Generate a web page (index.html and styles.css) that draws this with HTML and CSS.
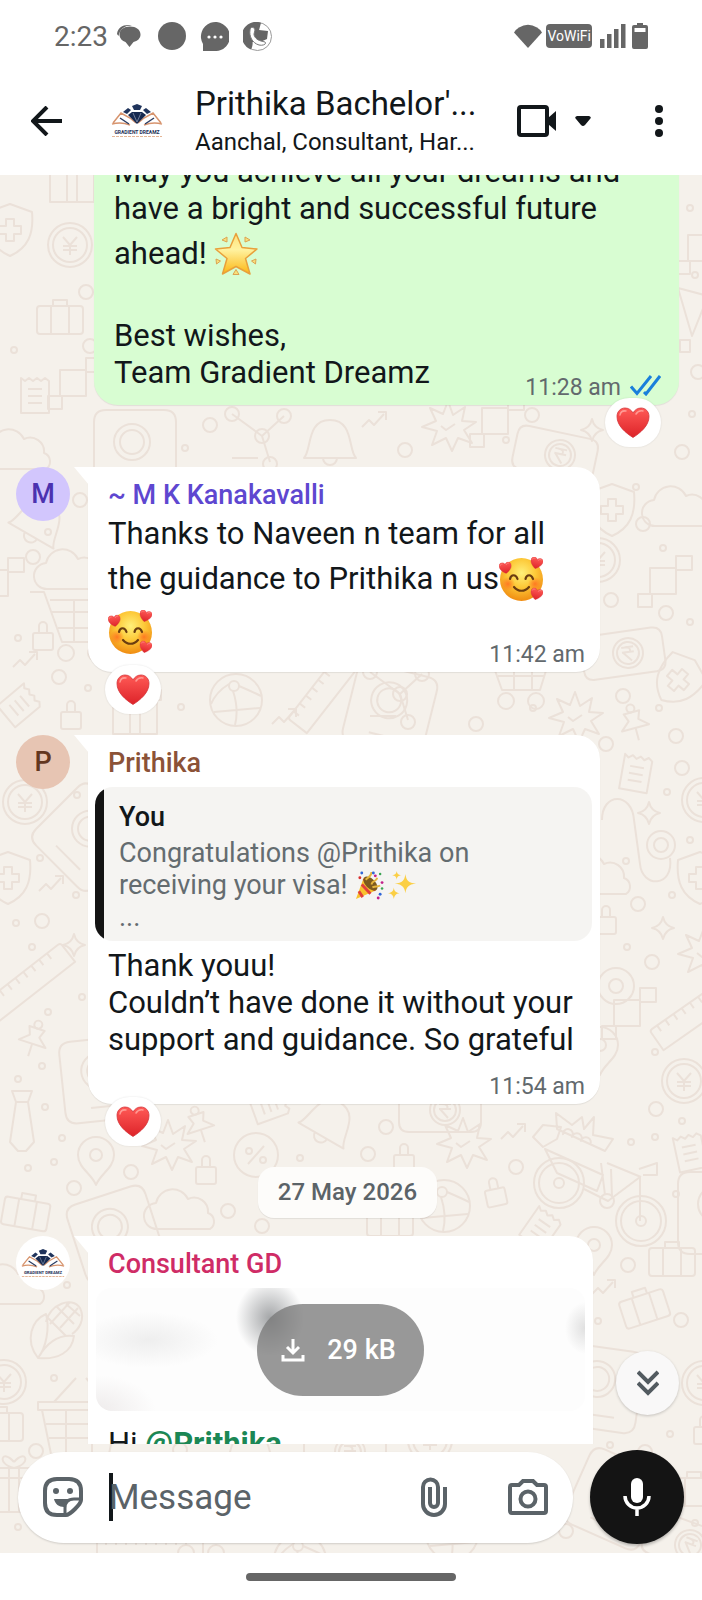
FILE: index.html
```
<!DOCTYPE html>
<html lang="en">
<head>
<meta charset="UTF-8" />
<meta name="viewport" content="width=device-width, initial-scale=1.0"/>
<title>Prithika Bachelor's - Chat</title>
<link rel="stylesheet" href="styles.css">
</head>
<body>

<!-- Shared drawings -->
<svg class="defs" aria-hidden="true">
    <defs>
        <linearGradient id="heartFill" x1="0" y1="0" x2="0" y2="1">
            <stop offset="0" stop-color="#ff5a56"/>
            <stop offset="1" stop-color="#dd2329"/>
        </linearGradient>
        <radialGradient id="faceFill" cx=".5" cy=".35" r=".65">
            <stop offset="0" stop-color="#fff07a"/>
            <stop offset=".5" stop-color="#fdc938"/>
            <stop offset="1" stop-color="#f08c12"/>
        </radialGradient>
        <radialGradient id="cheekFill">
            <stop offset="0" stop-color="#ff7a22"/>
            <stop offset="1" stop-color="#ff7a22" stop-opacity="0"/>
        </radialGradient>
        <linearGradient id="starFill" x1="0" y1="0" x2="0" y2="1">
            <stop offset="0" stop-color="#ffe27a"/>
            <stop offset=".4" stop-color="#fff2a0"/>
            <stop offset="1" stop-color="#fcb712"/>
        </linearGradient>
        <symbol id="heart" viewBox="0 0 34 31">
            <path d="M17 30.500C10 26 1 19 1 9.500C1 4.500 4.500 1 9 1c3.500 0 6.500 2 8 5c1.500-3 4.500-5 8-5c4.500 0 8 3.500 8 8.500C33 19 24 26 17 30.500z" fill="url(#heartFill)" stroke="#d3353a" stroke-width=".8"/>
            <path d="M4 8c.5-3 3-4.500 6-4M20 7c1.500-2.500 4-3.500 7-3" stroke="#ff9a94" stroke-width="1.500" fill="none" stroke-linecap="round"/>
        </symbol>
        <symbol id="loveFace" viewBox="0 0 44 44">
            <circle cx="22.500" cy="22.500" r="21.500" fill="url(#faceFill)"/>
            <circle cx="9" cy="27" r="7" fill="url(#cheekFill)"/>
            <circle cx="36" cy="27" r="7" fill="url(#cheekFill)"/>
            <path d="M11 22c1-5 6-5 7.500 0M26.500 22c1-5 6-5 7.500 0" stroke="#6b3d10" stroke-width="2.200" fill="none" stroke-linecap="round"/>
            <path d="M15 30c4 5 11 5 15 0" stroke="#6b3d10" stroke-width="2.200" fill="none" stroke-linecap="round"/>
            <use href="#heart" x="0" y="5" width="13" height="12" transform="rotate(-8 6 11)"/>
            <use href="#heart" x="31" y="0" width="13" height="12" transform="rotate(14 37 6)"/>
            <use href="#heart" x="31" y="31" width="13" height="12" transform="rotate(14 37 37)"/>
        </symbol>
        <symbol id="glowStar" viewBox="0 0 44 44">
            <path d="M22 1.500l6 14 15 1.500-11.500 9.500 4.500 15.500L22 34.500 8.500 42 13 26.500 1.500 17l14.500-1.500z" fill="url(#starFill)" stroke="#e8a03c" stroke-width="1.500" stroke-linejoin="round"/>
            <path d="M8 8l5-3v5zM31 5l5 3-5 2zM2 27l4.500 2L2.500 32zM42 27l-4.500 2 4 3zM19 42.500l3-5 3 5z" fill="#f8e27a" stroke="#dca353"/>
        </symbol>
        <symbol id="popper" viewBox="0 0 30 30">
            <path d="M1 29L9 7c5 1 11 7 13 13z" fill="#f9c22e"/>
            <path d="M4 21l4 6M7 14l9 9.500M9 8l12 12" stroke="#e2403b" stroke-width="3"/>
            <ellipse cx="16" cy="13" rx="5" ry="9" transform="rotate(-45 16 13)" fill="#7d5a1c"/>
            <path d="M11 9c4-4 6-3 6-8M17 14c1-5 5-2 6-7M18 17c4-2 5 0 8-2" fill="none" stroke="#e6b63c" stroke-width="2"/>
            <g fill="#c3218a"><circle cx="21" cy="5" r="1.500"/><circle cx="28" cy="12" r="1.500"/><circle cx="24" cy="28" r="1.500"/></g>
            <g fill="#3167d8"><circle cx="7" cy="2" r="1.500"/><circle cx="19" cy="2" r="1.500"/><circle cx="26" cy="24" r="1.500"/></g>
            <g fill="#3ba553"><circle cx="26" cy="3" r="1.300"/><circle cx="28" cy="18" r="1.300"/></g>
            <circle cx="5" cy="7" r="1.500" fill="#d93030"/>
        </symbol>
        <symbol id="sparkles" viewBox="0 0 30 30">
            <path d="M18 3c1 7 3 9 11 10-8 1-10 4-11 10-1-6-3-9-11-10 8-1 10-3 11-10zM6 17c.5 4 2 5 6 6-4 .5-5 2-6 6-.5-4-2-5.500-6-6 4-1 5.500-2 6-6zM9 0c.5 3 1.500 4 5 4.500-3.500.5-4.500 1.500-5 4.500-.5-3-1.500-4-5-4.500 3.500-.5 4.500-1.500 5-4.500z" fill="#fbcf45"/>
        </symbol>
        <symbol id="logo" viewBox="0 0 52 34">
            <g fill="none" stroke="#d7946e" stroke-width="1.500">
                <path d="M2 19l8-10 9 5 6 5M1 20c7-2 13-1 18 1M50 19l-8-10-9 5-6 5M51 20c-7-2-13-1-18 1"/>
                <path d="M9 14l9 6M43 14l-9 6" stroke="#2c3e63"/>
            </g>
            <path d="M17 11l4-3h10l4 3-9 9z" fill="#16294f"/>
            <path d="M21 2l5-2 5 2-2 4h-6zM12 8l5-4 3 2-4 4zM40 8l-5-4-3 2 4 4z" fill="#20345c"/>
            <path d="M22 9l4 9 4-9" stroke="#8693ad" stroke-width=".8" fill="none"/>
            <text x="26" y="29.500" text-anchor="middle" class="logo-name">GRADIENT DREAMZ</text>
            <path d="M1 32.500h50" stroke="#e5b595" stroke-width="1.200" stroke-dasharray="3 1"/>
        </symbol>

        <!-- Wallpaper doodles -->
        <g id="lock"><path d="M-8-3H8q2 0 2 2v13q0 2-2 2H-8q-2 0-2-2V-1q0-2 2-2zM-4-3v-7a4 4 0 018 0v7"/></g>
        <g id="dot"><circle r="3"/></g>
        <g id="ring"><circle r="7"/></g>
        <g id="coin"><circle r="22"/><circle r="17"/><path d="M-7-8L0 0l7-8M0 0v10M-7 1H7M-7 5H7"/></g>
        <g id="burst"><path d="M0-24l5 14 12-8-3 14 14 1-12 8 8 13-14-5-6 13-6-13-14 7 5-14-15-4 14-6-6-13 13 6z"/><path d="M-7 1l5 4 9-6"/></g>
        <g id="spark"><path d="M0-11q2 9 11 11-9 2-11 11-2-9-11-11 9-2 11-11z"/></g>
        <g id="receipt"><path d="M-14-17l4 3 4-3 4 3 4-3 4 3 4-3 4 3v32h-28zM-7-6H7M-7 1H7M-7 8H7"/></g>
        <g id="pin"><path d="M0 25c-4-11-18-17-18-30a18 18 0 0136 0C18 8 4 14 0 25z"/><circle cy="-5" r="6"/></g>
        <g id="boxes"><path d="M-18-10H8v26h-26zM8-22h16v14H8zM-30 16h14v13h-14z"/></g>
        <g id="ruler"><path d="M-50-12H50q3 0 3 3V12H-53V-9q0-3 3-3zM-44-12v7M-34-12v7M-24-12v7M-14-12v7M-4-12v7M6-12v7M16-12v7M26-12v7M36-12v7"/></g>
        <g id="trend"><path d="M-13 7l7-7 5 5L9-6M3-8h8v8"/></g>
        <g id="tie"><path d="M-10-30H10L6-19H-6zM-6-19l-6 40 8 9h8l8-9-6-40"/></g>
        <g id="pushpin"><path d="M-8-10H8l-3 8 9 8H-14l9-8zM0 6v13"/><circle cy="-14" r="4"/></g>
        <g id="case"><path d="M-20-12h40q3 0 3 3v22q0 3-3 3h-40q-3 0-3-3V-9q0-3 3-3zM-7-12v-6H7v6M-9-12v28M9-12v28"/></g>
        <g id="bell"><path d="M-26 18c8-8 2-38 26-38s18 30 26 38zM-7 18a7 7 0 0014 0"/></g>
        <g id="cart"><path d="M-40-28h14l18 50h38l13-42h-63M-18-8h57M-12 8h46M4-20v42M22-20v42"/><circle cx="-4" cy="33" r="8"/><circle cx="26" cy="33" r="8"/></g>
        <g id="basket"><path d="M-38-10h76l-9 44h-58zM-42-18h84v8h-84zM-34 4h68M-31 18h62M-14-10v44M12-10v44M-26-18l22-24M26-18L6-42"/></g>
        <g id="card"><path d="M-36-22h62q10 0 10 10v24q0 10-10 10h-62q-10 0-10-10v-24q0-10 10-10z"/><circle r="15"/><circle r="11"/><path d="M-6-6H6M-6-1H6M-3-6q7 0 5 5H-5L3 8"/></g>
        <g id="shield"><path d="M0-26l22 8c2 22-4 36-22 44-18-8-24-22-22-44zM-4-11h8v7h7v8H4v7h-8V4h-7v-8h7z"/></g>
        <g id="cloud"><path d="M-26 14a13 13 0 01-2-26 17 17 0 0132-4 14 14 0 0120 14 9 9 0 012 16z"/></g>
        <g id="net"><path d="M-30-18L0 4l22-20M0 4l8 26M-30 26h26"/><circle cx="-30" cy="-18" r="7"/><circle cx="22" cy="-16" r="7"/><circle r="7" cy="4"/><circle cx="8" cy="32" r="7"/></g>
        <g id="phone"><path d="M-34-40h58q12 0 12 12v58q0 12-12 12h-58q-12 0-12-12v-58q0-12 12-12z"/><circle cx="-8" cy="-8" r="18"/><circle cx="-8" cy="-8" r="12"/><path d="M-20 28H14"/></g>
        <g id="gift"><path d="M-22-12h44v34h-44zM-26-22h52v10h-52zM-5-22v44M5-22v44M0-22c-18-4-12-20 0-6M0-22c18-4 12-20 0-6"/></g>
        <g id="ball"><circle r="26"/><circle cx="-2" cy="-14" r="5"/><path d="M-7-16Q-20-8-25 4M3-14q14 6 22 10M-3-9q6 18 2 34M-22 12Q0 10 24 8"/></g>
        <g id="bike"><circle r="25"/><circle r="20"/><circle r="5"/><circle cx="82" cy="38" r="25"/><circle cx="82" cy="38" r="20"/><circle cx="82" cy="38" r="5"/><circle cx="48" cy="18" r="7"/><path d="M25 6l24 12 32-24v44M42-20l4 32M48-20l34 14M52-14l1 28M-14-34l58 26-6 16-40-18zM-26-46l10-12 18 2-4 12-14 8zM-2-54l-1-16 16 12 10-8 2 12 10-12-1 18 20 4-8 12zM80-14l18-6v12H84M4-48a5 5 0 119 2 5 5 0 119 4 5 5 0 119 4"/></g>
        <g id="corn"><path d="M-20 26c-14-18-6-38 8-44 4 14 0 34-8 44zM-20 26c20 2 34-6 36-22-16-2-28 8-36 22zM-12-10c4-18 26-26 34-14 6 12-2 22-8 26M-2-26l18 18M8-28l14 12M-10-14L8 4M20-24L2-4M12-30l-20 22"/></g>
    </defs>
</svg>

<div class="phone">

    <div class="status-bar">
        <span class="clock">2:23</span>
        <svg width="24" height="24" viewBox="0 0 24 24">
            <path d="M0 10C1 3 7 0 15 1.500 9 1 3 4 1.500 12z" fill="#666"/>
            <path d="M13 2.500c6 0 10.500 3 10.500 8 0 4-3 6.500-7 7.500l-4 5-4-5C5.500 17 2.500 14.500 2.500 10.500c0-5 4.500-8 10.500-8z" fill="#666"/>
        </svg>
        <svg class="status-app" width="28" height="28" viewBox="0 0 28 28"><circle cx="14" cy="14" r="14" fill="#666"/></svg>
        <svg width="29" height="29" viewBox="0 0 29 29">
            <path d="M3 29V22A14.500 14.500 0 1114.500 29z" fill="#666"/>
            <g fill="#fff"><circle cx="9" cy="15" r="1.600"/><circle cx="15" cy="15" r="1.600"/><circle cx="21" cy="15" r="1.600"/></g>
        </svg>
        <svg width="29" height="29" viewBox="0 0 29 29">
            <circle cx="14.500" cy="14.500" r="14" fill="#fff" stroke="#999"/>
            <path d="M18 .8A14 14 0 008 27.500C9 26 10 22 9.500 20.500L15 12z" fill="#666"/>
            <path d="M11 10l5-2 9 1-1 8-9 4-4-4z" fill="#666"/>
            <path d="M7 8c0-3 4-4 5 0l-1 4c0 3 3 6 7 7l4 1c2 2-2 4-6 3C9 21 6 14 7 8z" fill="#fff" stroke="#777"/>
        </svg>
        <span class="spacer"></span>
        <svg width="28" height="24" viewBox="0 0 28 24"><path d="M14 24L0 8.500Q1 6 5 3.500 14-2 23 3.500 27 6 28 8.500z" fill="#666"/></svg>
        <span class="vowifi">VoWiFi</span>
        <svg class="signal" width="26" height="24" viewBox="0 0 26 24"><path d="M0 15h4.500v9H0zM7 10h4.500v14H7zM14 5h4.500v19H14zM21 0h4.500v24H21z" fill="#666"/></svg>
        <svg width="16" height="26" viewBox="0 0 16 26"><path d="M5 0h6v2h3q2 0 2 2v20q0 2-2 2H2q-2 0-2-2V4q0-2 2-2h3z" fill="#666"/><path d="M2.500 5h11v4h-11z" fill="#fff"/></svg>
    </div>

    <header class="header">
        <button class="icon-btn back" aria-label="Back">
            <svg width="32" height="30" viewBox="0 0 32 30"><path d="M16 1L2 15l14 14M2 15h29" fill="none" stroke="#12171a" stroke-width="4"/></svg>
        </button>
        <svg class="group-logo" width="52" height="34"><use href="#logo"/></svg>
        <div class="chat-info">
            <h1>Prithika Bachelor'...</h1>
            <p>Aanchal, Consultant, Har...</p>
        </div>
        <button class="icon-btn call" aria-label="Video call">
            <svg width="40" height="32" viewBox="0 0 40 32"><rect x="2" y="2" width="28" height="28" rx="2" fill="none" stroke="#12171a" stroke-width="4"/><path d="M31 13l8-7v20l-8-7z" fill="#12171a"/></svg>
            <svg width="16" height="10" viewBox="0 0 16 10"><path d="M2 0h12q3 1 1 3L10 9q-2 2-4 0L1 3q-2-2 1-3z" fill="#12171a"/></svg>
        </button>
        <button class="icon-btn more" aria-label="More options">
            <svg width="8" height="32" viewBox="0 0 8 32"><g fill="#12171a"><circle cx="4" cy="4" r="4"/><circle cx="4" cy="16" r="4"/><circle cx="4" cy="28" r="4"/></g></svg>
        </button>
    </header>

    <main class="chat">
        <svg class="wallpaper" viewBox="0 175 702 1378" preserveAspectRatio="xMidYMin slice" aria-hidden="true">
            <use href="#gift" x="72" y="180"/><use href="#coin" x="70" y="245"/><use href="#ring" x="86" y="292"/><use href="#shield" x="10" y="230"/>
            <use href="#case" x="60" y="318"/><use href="#ring" x="90" y="346"/><use href="#receipt" x="35" y="395"/><use href="#dot" x="14" y="350"/><use href="#boxes" x="78" y="380"/>
            <use href="#cloud" x="20" y="455"/><use href="#burst" x="448" y="425"/><use href="#boxes" x="500" y="418"/><use href="#ring" x="532" y="415"/><use href="#net" x="262" y="432"/>
            <use href="#trend" x="375" y="420"/><use href="#card" x="560" y="455" transform="rotate(12 560 455)"/><use href="#spark" x="592" y="430"/><use href="#dot" x="506" y="440"/><use href="#phone" x="140" y="450"/>
            <use href="#bell" x="330" y="440"/><use href="#ring" x="210" y="425"/><use href="#dot" x="185" y="448"/><use href="#ring" x="405" y="450"/>
            <use href="#boxes" x="706" y="245"/><use href="#dot" x="690" y="208"/><use href="#dot" x="695" y="275"/><path d="M678 288l30 8-16 40zM680 340h10v12h-10z"/><use href="#ring" x="698" y="372"/><use href="#dot" x="692" y="414"/><use href="#ring" x="682" y="452"/>
            <use href="#bell" x="40" y="520" transform="rotate(30 40 520)"/><use href="#dot" x="48" y="532"/><use href="#ring" x="80" y="500"/><use href="#ring" x="33" y="557"/><use href="#cloud" x="74" y="575"/><use href="#cart" x="70" y="620"/><use href="#lock" x="43" y="636"/><use href="#dot" x="18" y="638"/><use href="#boxes" x="0" y="580"/><use href="#trend" x="26" y="660"/><use href="#ring" x="59" y="677"/><use href="#dot" x="88" y="688"/>
            <use href="#receipt" x="20" y="705" transform="rotate(50 20 705)"/><use href="#lock" x="71" y="715"/><use href="#gift" x="135" y="712"/><use href="#dot" x="181" y="707"/><use href="#ball" x="236" y="700"/><use href="#ruler" x="330" y="684" transform="rotate(-52 330 684)"/><use href="#trend" x="285" y="717"/>
            <use href="#net" x="400" y="690"/><use href="#phone" x="395" y="710" transform="rotate(14 395 710)"/><use href="#cart" x="510" y="668"/><use href="#ring" x="476" y="724"/><use href="#burst" x="575" y="716"/><use href="#pushpin" x="634" y="722" transform="rotate(-15 634 722)"/><use href="#dot" x="533" y="708"/>
            <use href="#shield" x="612" y="510"/><use href="#cloud" x="682" y="512"/><use href="#dot" x="636" y="487"/><use href="#ring" x="643" y="524"/><use href="#dot" x="663" y="548"/><use href="#coin" x="598" y="560"/><use href="#boxes" x="668" y="578"/><use href="#ring" x="611" y="600"/><use href="#ring" x="666" y="613"/><use href="#dot" x="690" y="622"/><use href="#card" x="628" y="653" transform="rotate(-8 628 653)"/><use href="#shield" x="678" y="680" transform="rotate(40 678 680)"/><use href="#ring" x="623" y="696"/><use href="#dot" x="659" y="708"/>
            <use href="#coin" x="25" y="802"/><use href="#dot" x="77" y="795"/><use href="#phone" x="90" y="840" transform="rotate(45 90 840)"/><use href="#shield" x="8" y="878"/><use href="#dot" x="40" y="858"/><use href="#trend" x="52" y="884"/><use href="#dot" x="76" y="895"/><use href="#ring" x="42" y="921"/><use href="#dot" x="16" y="923"/><use href="#spark" x="74" y="945"/><use href="#dot" x="32" y="947"/><use href="#ruler" x="26" y="985" transform="rotate(-38 26 985)"/><use href="#dot" x="82" y="997"/>
            <use href="#receipt" x="636" y="773" transform="rotate(10 636 773)"/><use href="#ring" x="606" y="744"/><use href="#ring" x="676" y="736"/><use href="#ring" x="682" y="768"/><use href="#dot" x="667" y="792"/><use href="#spark" x="649" y="813"/><use href="#coin" x="704" y="800"/><path d="M602 820c0-28 30-28 32 0l6 44c2 24 34 24 30-6"/><use href="#ring" x="661" y="845"/><circle cx="661" cy="845" r="14"/><use href="#dot" x="690" y="840"/><use href="#shield" x="700" y="878"/><use href="#cloud" x="600" y="880"/><use href="#dot" x="626" y="861"/><use href="#ring" x="638" y="904"/><use href="#spark" x="663" y="928"/><use href="#dot" x="672" y="895"/><use href="#lock" x="606" y="920"/><use href="#burst" x="704" y="952"/><use href="#ring" x="652" y="962"/><use href="#dot" x="627" y="947"/><circle cx="616" cy="986" r="18"/><use href="#ring" x="616" y="986"/><use href="#ruler" x="700" y="1010" transform="rotate(-35 700 1010)"/><use href="#boxes" x="632" y="1010"/>
            <use href="#pushpin" x="34" y="1038" transform="rotate(18 34 1038)"/><use href="#dot" x="48" y="1012"/><use href="#dot" x="42" y="1066"/><use href="#dot" x="18" y="1079"/><use href="#tie" x="22" y="1121"/><use href="#dot" x="45" y="1107"/><use href="#phone" x="108" y="1078" transform="rotate(-6 108 1078)"/><use href="#dot" x="62" y="1138"/><use href="#pin" x="96" y="1160"/><use href="#dot" x="54" y="1162"/><use href="#dot" x="28" y="1168"/><use href="#burst" x="168" y="1144"/><use href="#pushpin" x="199" y="1124" transform="rotate(-18 199 1124)"/><use href="#lock" x="206" y="1170"/><use href="#ring" x="131" y="1172"/><use href="#ring" x="74" y="1188"/><use href="#case" x="26" y="1212" transform="rotate(10 26 1212)"/><use href="#phone" x="120" y="1232" transform="rotate(-18 120 1232)"/><use href="#cloud" x="184" y="1215"/><circle cx="256" cy="1155" r="22"/><path d="M248 1164l16-18"/><use href="#dot" x="249" y="1151"/><use href="#dot" x="263" y="1160"/><use href="#ring" x="228" y="1211"/><use href="#receipt" x="270" y="1105" transform="rotate(70 270 1105)"/><use href="#bell" x="330" y="1120" transform="rotate(30 330 1120)"/><use href="#dot" x="300" y="1158"/>
            <use href="#card" x="445" y="1110"/><use href="#ring" x="386" y="1127"/><use href="#burst" x="463" y="1142"/><use href="#trend" x="514" y="1132"/><use href="#ring" x="368" y="1154"/><use href="#lock" x="404" y="1158"/><use href="#ball" x="444" y="1206"/><use href="#lock" x="495" y="1192" transform="rotate(-12 495 1192)"/><use href="#ring" x="516" y="1167"/><use href="#case" x="390" y="1220"/><use href="#ring" x="262" y="1226"/><use href="#bike" x="559" y="1183"/><use href="#receipt" x="541" y="1228" transform="rotate(35 541 1228)"/>
            <use href="#coin" x="684" y="1081"/><use href="#dot" x="655" y="1052"/><use href="#ring" x="656" y="1109"/><use href="#dot" x="682" y="1121"/><use href="#receipt" x="690" y="1152" transform="rotate(-12 690 1152)"/><use href="#dot" x="655" y="1137"/><use href="#dot" x="631" y="1142"/><use href="#dot" x="676" y="1194"/><use href="#phone" x="724" y="1212"/><use href="#pin" x="600" y="1050"/><use href="#ring" x="628" y="1265"/><use href="#case" x="672" y="1260"/><use href="#pin" x="594" y="1250"/>
            <use href="#corn" x="58" y="1332"/><use href="#dot" x="67" y="1285"/><use href="#cloud" x="14" y="1290"/><use href="#coin" x="4" y="1382"/><use href="#dot" x="54" y="1378"/><use href="#basket" x="80" y="1420"/><use href="#case" x="0" y="1425"/><use href="#ring" x="36" y="1451"/><use href="#gift" x="14" y="1490"/><use href="#dot" x="18" y="1527"/><use href="#ruler" x="150" y="1550"/><use href="#cart" x="190" y="1520"/><use href="#ball" x="300" y="1560"/><use href="#card" x="350" y="1452"/><use href="#bell" x="250" y="1452"/><use href="#ball" x="452" y="1534"/><use href="#coin" x="430" y="1440"/><use href="#ring" x="180" y="1450"/>
            <use href="#trend" x="604" y="1288"/><use href="#case" x="644" y="1307" transform="rotate(-18 644 1307)"/><use href="#ring" x="681" y="1320"/><use href="#dot" x="598" y="1321"/><use href="#phone" x="604" y="1388" transform="rotate(8 604 1388)"/><use href="#coin" x="704" y="1383"/><use href="#dot" x="670" y="1434"/><use href="#lock" x="704" y="1430"/><use href="#dot" x="610" y="1445"/><use href="#ring" x="645" y="1452"/><use href="#ring" x="566" y="1531"/><use href="#phone" x="620" y="1500" transform="rotate(24 620 1500)"/><use href="#case" x="694" y="1490"/><use href="#dot" x="695" y="1523"/><use href="#card" x="690" y="1545" transform="rotate(20 690 1545)"/>
        </svg>

        <div class="messages">
            <article class="bubble sent">
                <p>May you achieve all your dreams and<br>have a bright and successful future<br>ahead! <svg class="emoji" role="img" aria-label="glowing star"><use href="#glowStar"/></svg><br><br>Best wishes,<br>Team Gradient Dreamz</p>
                <div class="time inline">
                    <time>11:28 am</time>
                    <svg width="31" height="21" viewBox="0 0 31 21"><path d="M1 11.500l6 7L21 1M14 17l2 2L30 1" fill="none" stroke="#1a7fdb" stroke-width="3"/></svg>
                </div>
                <span class="reaction"><svg width="34" height="31"><use href="#heart"/></svg></span>
            </article>

            <div class="row">
                <span class="avatar purple">M</span>
                <article class="bubble">
                    <h2 class="name purple-text">~ M K Kanakavalli</h2>
                    <p>Thanks to Naveen n team for all<br>the guidance to Prithika n us<svg class="emoji" role="img" aria-label="smiling face with hearts"><use href="#loveFace"/></svg><br><svg class="emoji" role="img" aria-label="smiling face with hearts"><use href="#loveFace"/></svg></p>
                    <div class="time inline"><time>11:42 am</time></div>
                    <span class="reaction"><svg width="34" height="31"><use href="#heart"/></svg></span>
                </article>
            </div>

            <div class="row">
                <span class="avatar peach">P</span>
                <article class="bubble">
                    <h2 class="name brown-text">Prithika</h2>
                    <blockquote class="quote">
                        <strong>You</strong>
                        <p>Congratulations @Prithika on<br>receiving your visa! <svg class="emoji-small" role="img" aria-label="party popper"><use href="#popper"/></svg><svg class="emoji-small" role="img" aria-label="sparkles"><use href="#sparkles"/></svg><br>...</p>
                    </blockquote>
                    <p>Thank youu!<br>Couldn’t have done it without your<br>support and guidance. So grateful</p>
                    <div class="time below"><time>11:54 am</time></div>
                    <span class="reaction"><svg width="34" height="31"><use href="#heart"/></svg></span>
                </article>
            </div>

            <div class="date">27 May 2026</div>

            <div class="row">
                <span class="avatar white"><svg width="44" height="29"><use href="#logo"/></svg></span>
                <article class="bubble media">
                    <h2 class="name pink-text">Consultant GD</h2>
                    <div class="preview">
                        <button class="download">
                            <svg width="24" height="24" viewBox="0 0 24 24"><path d="M12 1v14M6 9l6 6 6-6M2 17v5h20v-5" fill="none" stroke="#fff" stroke-width="3"/></svg>
                            29 kB
                        </button>
                    </div>
                    <p>Hi <a href="#prithika">@Prithika</a></p>
                </article>
            </div>
        </div>

        <button class="scroll-down" aria-label="Scroll to latest">
            <svg width="22" height="26" viewBox="0 0 22 26"><path d="M1 2l10 10L21 2M1 13l10 10 10-10" fill="none" stroke="#535b60" stroke-width="4"/></svg>
        </button>

        <form class="composer">
            <div class="field">
                <button type="button" class="icon-btn" aria-label="Stickers">
                    <svg width="40" height="40" viewBox="0 0 40 40">
                        <path d="M14 2h12q12 0 12 12v9c0 4-11 15-15 15h-9Q2 38 2 26V14Q2 2 14 2z" fill="none" stroke="#5b6368" stroke-width="4"/>
                        <path d="M38 22h-7q-9 0-9 9v7" fill="none" stroke="#5b6368" stroke-width="3"/>
                        <path d="M11 22h18c-3 2-8 3-8 8-5 0-9-3-10-8z" fill="#5b6368"/>
                        <circle cx="13" cy="14" r="3" fill="#5b6368"/><circle cx="27" cy="14" r="3" fill="#5b6368"/>
                    </svg>
                </button>
                <span class="caret"></span>
                <input type="text" placeholder="Message" aria-label="Message">
                <button type="button" class="icon-btn attach" aria-label="Attach">
                    <svg width="26" height="40" viewBox="0 0 26 40"><path d="M24 10v17a11 11 0 01-22 0V10a7.500 7.500 0 0115 0v16a4 4 0 01-8 0V10" fill="none" stroke="#5b6368" stroke-width="4"/></svg>
                </button>
                <button type="button" class="icon-btn" aria-label="Camera">
                    <svg width="40" height="36" viewBox="0 0 40 36"><path d="M4 6h7l4-4h10l4 4h7q2 0 2 2v24q0 2-2 2H4q-2 0-2-2V8q0-2 2-2z" fill="none" stroke="#5b6368" stroke-width="4"/><circle cx="20" cy="20" r="7.500" fill="none" stroke="#5b6368" stroke-width="4"/></svg>
                </button>
            </div>
            <button type="button" class="mic" aria-label="Voice message">
                <svg width="28" height="38" viewBox="0 0 28 38"><rect x="8" y="0" width="12" height="25" rx="6" fill="#fff"/><path d="M2 18a12 12 0 0024 0M14 30v8" fill="none" stroke="#fff" stroke-width="3.500"/></svg>
            </button>
        </form>
    </main>

    <div class="nav-bar"><span></span></div>
</div>

</body>
</html>
```
FILE: styles.css
```
* {
    box-sizing: border-box;
}

body {
    margin: 0;
    background: #fff;
    color: #12171a;
    font-family: Roboto, "Liberation Sans", sans-serif;
}

h1, h2, p, blockquote {
    margin: 0;
    font-weight: normal;
}

button {
    border: none;
    padding: 0;
    background: none;
    font-family: inherit;
    cursor: pointer;
}

svg {
    flex-shrink: 0;
}

.defs {
    position: absolute;
    width: 0;
    height: 0;
}

.logo-name {
    font-size: 5px;
    font-weight: bold;
    fill: #1d3057;
}

.phone {
    display: flex;
    flex-direction: column;
    height: 100vh;
}

/* Status bar */
.status-bar {
    display: flex;
    align-items: center;
    height: 72px;
    padding: 0 54px;
    gap: 14px;
    color: #666;
}

.clock {
    font-size: 28px;
    margin-right: -5px;
}

.status-app {
    margin-left: 3px;
}

.spacer {
    flex: 1;
}

.vowifi {
    background: #666;
    color: #fff;
    border-radius: 4px;
    padding: 0 1px;
    font-size: 14px;
    line-height: 24px;
    margin: 0 -6px 0 -10px;
}

.signal {
    margin-right: -8px;
}

/* Header */
.header {
    display: flex;
    align-items: center;
    height: 103px;
    padding: 0 39px 5px 31px;
}

.icon-btn {
    display: flex;
    align-items: center;
}

.group-logo {
    margin: 0 32px 0 48px;
}

.chat-info {
    flex: 1;
    min-width: 0;
    white-space: nowrap;
}

.chat-info h1 {
    font-size: 33px;
    line-height: 42px;
}

.chat-info p {
    font-size: 24px;
    line-height: 34px;
}

.call {
    gap: 18px;
    margin-right: 64px;
}

/* Chat */
.chat {
    position: relative;
    flex: 1;
    min-height: 0;
    display: flex;
    flex-direction: column;
    background: #f5f1eb;
    overflow: hidden;
}

.wallpaper {
    position: absolute;
    top: 0;
    left: 0;
    width: 100%;
    height: 100%;
    fill: none;
    stroke: #ebe1d9;
    stroke-width: 2;
    stroke-linejoin: round;
}

.messages {
    position: relative;
    flex: 1;
    min-height: 0;
    overflow: hidden;
    display: flex;
    flex-direction: column;
    padding: 0 23px 0 16px;
}

.row {
    display: flex;
    align-items: flex-start;
    flex-shrink: 0;
    gap: 18px;
    margin-bottom: 63px;
}

.avatar {
    display: flex;
    align-items: center;
    justify-content: center;
    flex-shrink: 0;
    width: 54px;
    height: 54px;
    border-radius: 50%;
    font-size: 27px;
    font-weight: 500;
}

.purple { background: #d2c6fd; color: #4b32b0; }
.peach { background: #e7c5b3; color: #63371f; }
.white { background: #fff; }

.bubble {
    position: relative;
    flex: 0 1 512px;
    background: #fff;
    border-radius: 0 24px 24px 24px;
    padding: 8px 15px 4px 20px;
    font-size: 31px;
    line-height: 37px;
    box-shadow: 0 1px 1px rgba(0,0,0,0.08);
}

/* corner tail */
.row .bubble::before {
    content: "";
    position: absolute;
    top: 0;
    left: -14px;
    width: 15px;
    height: 18px;
    background: #fff;
    clip-path: polygon(0 0, 100% 0, 100% 100%);
}

.sent {
    flex: none;
    margin: -46px 0 62px 78px;
    padding: 24px 18px 4px 20px;
    background: #d8fdd2;
    border-radius: 24px;
}

.media {
    flex-basis: 505px;
    border-bottom-right-radius: 0;
    border-bottom-left-radius: 0;
}

.name {
    font-size: 27px;
    font-weight: 500;
    line-height: 40px;
}

.purple-text { color: #5e47d0; }
.brown-text { color: #8b5237; }
.pink-text { color: #cf2c66; }

.emoji {
    width: 44px;
    height: 44px;
    margin: 5px 0 4px;
    vertical-align: -16px;
}

.time {
    position: relative;
    display: flex;
    align-items: flex-start;
    justify-content: flex-end;
    gap: 9px;
    font-size: 23px;
    line-height: 26px;
    color: #62696d;
}

.time.inline {
    margin-top: -16px;
}

.time.below {
    margin-top: 16px;
}

.reaction {
    position: absolute;
    left: 17px;
    bottom: -42px;
    display: flex;
    align-items: center;
    justify-content: center;
    width: 56px;
    height: 49px;
    border-radius: 25px;
    background: #fff;
    box-shadow: 0 0 2px rgba(0,0,0,0.12);
}

.sent .reaction {
    left: auto;
    right: 18px;
}

.quote {
    margin: 4px -7px 6px -13px;
    padding: 12px 16px 8px 24px;
    border-radius: 18px;
    background: linear-gradient(90deg, #141414 9px, #f5f4f2 9px);
    font-size: 27px;
    line-height: 32px;
    color: #646c70;
}

.quote strong {
    display: block;
    font-weight: 500;
    line-height: 36px;
    margin-bottom: 2px;
    color: #12171a;
}

.emoji-small {
    width: 29px;
    height: 29px;
    margin: 0 3px 0 1px;
    vertical-align: -6px;
}

.date {
    align-self: center;
    flex-shrink: 0;
    margin: 0 0 18px 0;
    padding: 0 20px;
    border-radius: 16px;
    background: #fdfcfa;
    box-shadow: 0 1px 1px rgba(0,0,0,0.08);
    font-size: 24px;
    font-weight: 500;
    line-height: 51px;
    color: #5b6368;
}

.preview {
    display: flex;
    align-items: center;
    justify-content: center;
    height: 123px;
    margin: 4px -7px 14px -12px;
    border-radius: 16px;
    background:
        radial-gradient(ellipse 34px 38px at 174px 30px, #a4a6a8, rgba(255,255,255,0)),
        radial-gradient(ellipse 70px 28px at 52px 52px, #eeeeee, rgba(255,255,255,0)),
        radial-gradient(ellipse 20px 26px at 100% 40px, #e0e0e0, rgba(255,255,255,0)),
        radial-gradient(ellipse 60px 36px at 0 100%, #eeebeb, rgba(255,255,255,0)),
        #fdfdfd;
}

.download {
    display: flex;
    align-items: center;
    gap: 22px;
    height: 92px;
    padding: 0 28px 0 24px;
    border-radius: 46px;
    background: rgba(120,120,120,0.76);
    color: #fff;
    font-size: 27px;
    font-weight: 500;
}

.bubble a {
    color: #1b8755;
    font-weight: 700;
    text-decoration: none;
}

.scroll-down {
    position: absolute;
    right: 23px;
    bottom: 138px;
    display: flex;
    align-items: center;
    justify-content: center;
    width: 63px;
    height: 64px;
    border-radius: 50%;
    background: #f9f8f8;
    box-shadow: 0 1px 3px rgba(0,0,0,0.2);
}

/* Composer */
.composer {
    position: relative;
    display: flex;
    align-items: center;
    gap: 17px;
    padding: 6px 18px 9px;
}

.field {
    flex: 1;
    min-width: 0;
    display: flex;
    align-items: center;
    height: 91px;
    padding: 0 25px;
    border-radius: 46px;
    background: #fff;
    box-shadow: 0 1px 2px rgba(0,0,0,0.15);
}

.caret {
    width: 4px;
    height: 48px;
    margin-left: 26px;
    background: #12171a;
}

.field input {
    flex: 1;
    min-width: 0;
    border: none;
    padding: 0;
    margin-left: -4px;
    outline: none;
    background: none;
    font: inherit;
    font-size: 35px;
    color: #12171a;
}

.field input::placeholder {
    color: #5b6368;
    opacity: 1;
}

.attach {
    margin-right: 61px;
}

.mic {
    display: flex;
    align-items: center;
    justify-content: center;
    width: 94px;
    height: 94px;
    border-radius: 50%;
    background: #141414;
    box-shadow: 0 2px 3px rgba(0,0,0,0.25);
}

/* System navigation */
.nav-bar {
    display: flex;
    align-items: center;
    justify-content: center;
    height: 47px;
}

.nav-bar span {
    width: 30%;
    height: 8px;
    border-radius: 4px;
    background: #666;
}
```
